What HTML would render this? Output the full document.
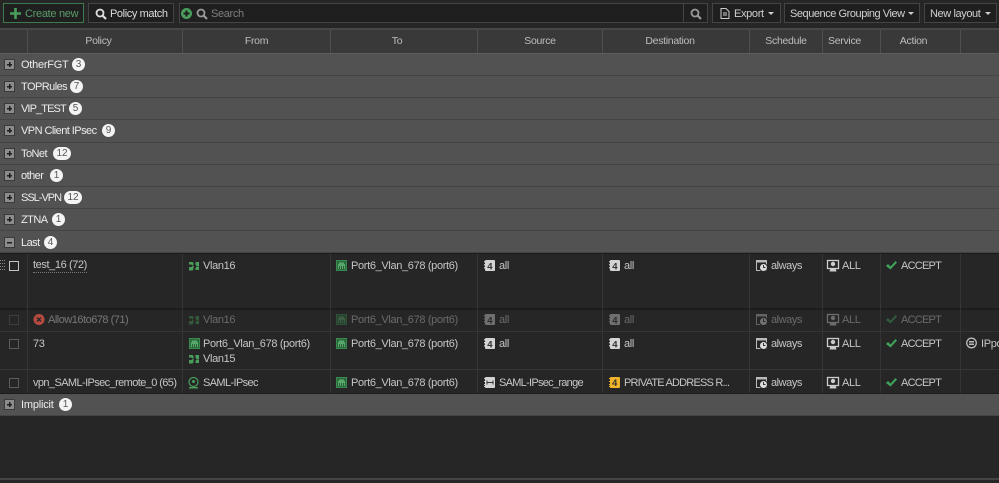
<!DOCTYPE html>
<html><head><meta charset="utf-8"><style>
html,body{margin:0;padding:0;background:#262626}
#p{position:relative;width:999px;height:483px;overflow:hidden;background:#262626;font:11px "Liberation Sans",sans-serif;color:#c6c6c6}
#p div,#p span.t,#p svg{position:absolute}
.t{white-space:nowrap;line-height:14px;letter-spacing:-.34px}
.btn{top:3px;height:18px;border:1px solid #444;background:#1f1f1f;box-sizing:content-box}
.hc{top:30px;height:23px;background:#393939;border-right:1px solid #4f4f4f;box-sizing:border-box;text-align:center;line-height:23px;color:#bdbdbd;letter-spacing:-.3px;font-size:10.5px}
.g{left:0;width:999px;height:21px;background:#525252;border-bottom:1px solid #444}
.gi{left:4px;width:9px;height:9px;background:#8c8c8c;border:1px solid #3a3a3a;box-sizing:content-box}
.gi:before{content:"";position:absolute;left:2px;top:4px;width:5px;height:1px;background:#1c1c1c;box-shadow:0 .5px 0 #1c1c1c}
.gi.p:after{content:"";position:absolute;left:4px;top:2px;width:1px;height:5px;background:#1c1c1c;box-shadow:.5px 0 0 #1c1c1c}
.gt{color:#ececec;letter-spacing:-.55px}
.b{height:13px;background:#f4f4f4;border-radius:7px;color:#555;text-align:center;line-height:13px;font-size:10px}
.v{width:1px;background:#353535}
.h{left:0;width:999px;height:1px;background:#353535}
.cb{width:8px;height:8px;border:1px solid #5c5c5c}
.dim{opacity:.42}
</style></head><body><div id="p">
<div style="left:0;top:0;width:999px;height:28px;background:#262626"></div>
<div style="left:0;top:28px;width:999px;height:2px;background:#484848"></div>

<div class="btn" style="left:3px;width:79px;border-color:#3f7a4c"></div>
<svg style="left:10px;top:8px" width="11" height="11"><path d="M4.200 0h2.600v4.200H11v2.600H6.800V11H4.200V6.800H0V4.200h4.200z" fill="#4a9e5c"/></svg>
<span class="t" style="left:25px;top:7px;color:#5b9c6b;letter-spacing:-.3px">Create new</span>

<div class="btn" style="left:88px;width:84px"></div>
<svg style="left:95px;top:8px" width="12" height="12"><circle cx="5" cy="5" r="3.500" fill="none" stroke="#ddd" stroke-width="1.800"/><path d="M7.500 7.500l3.500 3.500" stroke="#ddd" stroke-width="2.200"/></svg>
<span class="t" style="left:110px;top:7px;color:#dcdcdc;letter-spacing:-.4px">Policy match</span>

<div class="btn" style="left:179px;width:527px"></div>
<svg style="left:181px;top:8px" width="11" height="11"><circle cx="5.500" cy="5.500" r="5.500" fill="#4a9e5c"/><path d="M4.500 2.500h2v2h2v2h-2v2h-2v-2h-2v-2h2z" fill="#1e1e1e"/></svg>
<svg style="left:196px;top:8px" width="12" height="12"><circle cx="5" cy="5" r="3.500" fill="none" stroke="#999" stroke-width="1.800"/><path d="M7.500 7.500l3.500 3.500" stroke="#999" stroke-width="2.200"/></svg>
<span class="t" style="left:211px;top:7px;color:#7e7e7e">Search</span>
<div class="v" style="left:683px;top:4px;height:18px;background:#444"></div>
<svg style="left:690px;top:8px" width="12" height="12"><circle cx="5" cy="5" r="3.500" fill="none" stroke="#999" stroke-width="1.800"/><path d="M7.500 7.500l3.500 3.500" stroke="#999" stroke-width="2.200"/></svg>
<div class="btn" style="left:712px;width:67px"></div>
<svg style="left:720px;top:8px" width="10" height="11"><path d="M1 .5h5l3 3v7H1z" fill="none" stroke="#ccc"/><path d="M3 5h4M3 7h4" stroke="#ccc"/></svg>
<span class="t" style="left:734px;top:7px;color:#d0d0d0">Export</span>
<svg style="left:768px;top:12px" width="7" height="4"><path d="M0 0h6L3 3z" fill="#ccc"/></svg>
<div class="btn" style="left:784px;width:134px"></div>
<span class="t" style="left:790px;top:7px;color:#d0d0d0;letter-spacing:-.45px">Sequence Grouping View</span>
<svg style="left:908px;top:12px" width="7" height="4"><path d="M0 0h6L3 3z" fill="#ccc"/></svg>
<div class="btn" style="left:924px;width:71px"></div>
<span class="t" style="left:930px;top:7px;color:#d0d0d0;letter-spacing:-.4px">New layout</span>
<svg style="left:985px;top:12px" width="7" height="4"><path d="M0 0h6L3 3z" fill="#ccc"/></svg>

<div class="hc" style="left:0;width:28px"></div>
<div class="hc" style="left:28px;width:155px;padding-right:13px">Policy</div>
<div class="hc" style="left:183px;width:148px">From</div>
<div class="hc" style="left:331px;width:147px;padding-right:14px">To</div>
<div class="hc" style="left:478px;width:125px">Source</div>
<div class="hc" style="left:603px;width:147px;padding-right:12px">Destination</div>
<div class="hc" style="left:750px;width:73px">Schedule</div>
<div class="hc" style="left:823px;width:58px;padding-right:14px">Service</div>
<div class="hc" style="left:881px;width:80px;padding-right:14px">Action</div>
<div class="hc" style="left:961px;width:38px;border-right:0"></div>
<div style="left:0;top:53px;width:999px;height:1px;background:#5c5c5c"></div>

<div class="g" style="top:54px"></div><div class="gi p" style="left:4px;top:59px"></div><span class="t gt" style="left:21px;top:58px;letter-spacing:-.25px">OtherFGT</span><div class="b" style="left:72px;top:58px;width:13px">3</div>
<div class="g" style="top:76px"></div><div class="gi p" style="left:4px;top:81px"></div><span class="t gt" style="left:21px;top:80px">TOPRules</span><div class="b" style="left:70px;top:80px;width:13px">7</div>
<div class="g" style="top:98px"></div><div class="gi p" style="left:4px;top:103px"></div><span class="t gt" style="left:21px;top:102px;letter-spacing:-.9px">VIP_TEST</span><div class="b" style="left:69px;top:102px;width:13px">5</div>
<div class="g" style="top:120px;height:22px"></div><div class="gi p" style="left:4px;top:125px"></div><span class="t gt" style="left:21px;top:124px">VPN Client IPsec</span><div class="b" style="left:102px;top:124px;width:13px">9</div>
<div class="g" style="top:143px"></div><div class="gi p" style="left:4px;top:148px"></div><span class="t gt" style="left:21px;top:147px">ToNet</span><div class="b" style="left:53px;top:147px;width:18px">12</div>
<div class="g" style="top:165px"></div><div class="gi p" style="left:4px;top:170px"></div><span class="t gt" style="left:21px;top:169px">other</span><div class="b" style="left:50px;top:169px;width:13px">1</div>
<div class="g" style="top:187px"></div><div class="gi p" style="left:4px;top:192px"></div><span class="t gt" style="left:21px;top:191px;letter-spacing:-1px">SSL-VPN</span><div class="b" style="left:64px;top:191px;width:18px">12</div>
<div class="g" style="top:209px"></div><div class="gi p" style="left:4px;top:214px"></div><span class="t gt" style="left:21px;top:213px">ZTNA</span><div class="b" style="left:52px;top:213px;width:13px">1</div>
<div class="g" style="top:231px"></div><div class="gi" style="left:4px;top:237px"></div><span class="t gt" style="left:21px;top:236px">Last</span><div class="b" style="left:44px;top:236px;width:13px">4</div>
<div class="g" style="top:394px"></div><div class="gi p" style="left:4px;top:399px"></div><span class="t gt" style="left:21px;top:398px;letter-spacing:-.2px">Implicit</span><div class="b" style="left:59px;top:398px;width:13px">1</div>

<div style="left:0;top:253px;width:999px;height:1px;background:#1c1c1c"></div>
<div class="h" style="top:308px;height:2px;background:#1c1c1c"></div>
<div class="h" style="top:331px"></div>
<div class="h" style="top:369px"></div>
<div class="h" style="top:393px;background:#1c1c1c"></div>
<div style="left:0;top:478px;width:999px;height:2px;background:#444"></div>
<div class="v" style="left:27px;top:254px;height:139px"></div>
<div class="v" style="left:182px;top:254px;height:139px"></div>
<div class="v" style="left:330px;top:254px;height:139px"></div>
<div class="v" style="left:477px;top:254px;height:139px"></div>
<div class="v" style="left:602px;top:254px;height:139px"></div>
<div class="v" style="left:749px;top:254px;height:139px"></div>
<div class="v" style="left:822px;top:254px;height:139px"></div>
<div class="v" style="left:880px;top:254px;height:139px"></div>
<div class="v" style="left:960px;top:254px;height:139px"></div>

<svg style="left:0;top:260px" width="6" height="11"><g fill="#888"><rect x="0" y="0" width="1" height="1"/><rect x="2" y="0" width="1" height="1"/><rect x="4" y="0" width="1" height="1"/><rect x="0" y="3" width="1" height="1"/><rect x="2" y="3" width="1" height="1"/><rect x="4" y="3" width="1" height="1"/><rect x="0" y="6" width="1" height="1"/><rect x="2" y="6" width="1" height="1"/><rect x="4" y="6" width="1" height="1"/><rect x="0" y="9" width="1" height="1"/><rect x="2" y="9" width="1" height="1"/><rect x="4" y="9" width="1" height="1"/></g></svg>
<div class="cb" style="left:9px;top:261px;border-color:#c4c4c4"></div>
<span class="t" style="left:33px;top:259px;border-bottom:1px dotted #777;line-height:13px;letter-spacing:-.4px">test_16 (72)</span>
<span class="t" style="left:203px;top:259px">Vlan16</span>
<span class="t" style="left:351px;top:259px">Port6_Vlan_678 (port6)</span>
<span class="t" style="left:499px;top:259px">all</span>
<span class="t" style="left:624px;top:259px">all</span>
<span class="t" style="left:771px;top:259px;letter-spacing:-.45px">always</span>
<span class="t" style="left:842px;top:259px">ALL</span>
<span class="t" style="left:901px;top:259px;letter-spacing:-.75px">ACCEPT</span>

<svg style="left:0;top:0" width="999" height="483">
<defs>
<g id="port"><rect width="11" height="11" fill="#3a8a50"/><rect x="1" y="1" width="9" height="9" fill="#2a6a3c"/><path d="M2 9V4h1V2.500h5V4h1v5z" fill="#58a86c"/><path d="M3.500 9V6M5.500 9V6M7.500 9V6" stroke="#1f5230" stroke-width=".8"/></g>
<g id="vlan"><path d="M0 1h3.500l1 1v2.500h-1L2.500 3.500H0zM0 6h2.500l1-1h1v3l-1 1.500H0zM6.500 1H10v4H7.500L6.500 3.500zM6.500 7l1-1.500H10V9H6.500z" fill="#4a9e5c"/></g>
<g id="addr"><rect x="1" y="0" width="10" height="11" fill="#d4d4d4" rx="1"/><path d="M0 1h1v1.500H0zM0 4h1v1.500H0zM0 7h1v1.500H0z" fill="#bbb"/><text x="3.200" y="9.300" font-size="9.500" font-weight="bold" font-family="Liberation Sans" fill="#333">4</text></g>
<g id="sch"><rect x=".5" y=".5" width="10" height="10" fill="none" stroke="#bbb"/><rect x="0" y="0" width="11" height="2.500" fill="#bbb"/><circle cx="7.500" cy="7.500" r="4" fill="#ddd" stroke="#262626"/><path d="M7.500 5v2.500h2" stroke="#333" fill="none"/></g>
<g id="svc"><rect x=".5" y=".5" width="11" height="8" fill="none" stroke="#ccc" stroke-width="1.300"/><circle cx="6" cy="4" r="2.200" fill="#ccc"/><path d="M2.500 11.500l1-3.500h5l1 3.500z" fill="#ccc"/></g>
<path id="chk" d="M0 5l2-2 2.500 2.500L9.500 0l1.500 1.500-6.500 7z" fill="#3fa35a"/>
</defs>
<use href="#vlan" x="189" y="261"/><use href="#port" x="336" y="260"/><use href="#addr" x="484" y="260"/><use href="#addr" x="609" y="260"/><use href="#sch" x="756" y="260"/><use href="#svc" x="827" y="260"/><use href="#chk" x="886" y="261"/>
<use href="#port" x="189" y="338"/><use href="#vlan" x="189" y="354"/><use href="#port" x="336" y="338"/><use href="#addr" x="484" y="338"/><use href="#addr" x="609" y="338"/><use href="#sch" x="756" y="338"/><use href="#svc" x="827" y="338"/><use href="#chk" x="886" y="339"/>
<circle cx="971.500" cy="343" r="4.800" fill="none" stroke="#bbb" stroke-width="1.300"/><path d="M969 341.500h5M969 343h5M969 344.500h5" stroke="#bbb"/>
<circle cx="193.500" cy="382" r="4.500" fill="none" stroke="#4a9e5c" stroke-width="1.200"/><circle cx="193.500" cy="381.500" r="1.500" fill="#4a9e5c"/><path d="M189 388.500h9v-1.500h-9z" fill="#4a9e5c"/>
<use href="#port" x="336" y="377"/>
<rect x="485" y="377" width="10" height="11" fill="#d4d4d4" rx="1"/><path d="M486.500 382.500h7M487 380.500v4M493 380.500v4" stroke="#333"/><path d="M484 378h1v1h-1zM484 381h1v1h-1zM484 384h1v1h-1zM484 387h1v-1h-1z" fill="#ccc"/>
<rect x="610" y="377" width="10" height="11" fill="#f0b429" rx="1"/><path d="M609 378h1v1h-1zM609 381h1v1h-1zM609 384h1v1h-1zM609 386h1v1h-1z" fill="#f0b429"/><text x="612" y="386" font-size="9.500" font-weight="bold" font-family="Liberation Sans" fill="#333">4</text>
<use href="#sch" x="756" y="377"/><use href="#svc" x="827" y="377"/><use href="#chk" x="886" y="378"/>
<g opacity=".42"><use href="#vlan" x="189" y="315"/><use href="#port" x="336" y="314"/><use href="#addr" x="484" y="314"/><use href="#addr" x="609" y="314"/><use href="#sch" x="756" y="314"/><use href="#svc" x="827" y="314"/><use href="#chk" x="886" y="315"/></g>
<circle cx="39" cy="319.500" r="5.500" fill="#b84a3f"/><path d="M37 317.500l4 4M41 317.500l-4 4" stroke="#2a2a2a" stroke-width="1.500"/>
</svg>

<div class="cb" style="left:9px;top:315px;border-color:#3e3e3e"></div>
<span class="t" style="left:48px;top:313px;opacity:.5;letter-spacing:-.5px">Allow16to678 (71)</span>
<span class="t dim" style="left:203px;top:313px">Vlan16</span>
<span class="t dim" style="left:351px;top:313px">Port6_Vlan_678 (port6)</span>
<span class="t dim" style="left:499px;top:313px">all</span>
<span class="t dim" style="left:624px;top:313px">all</span>
<span class="t dim" style="left:771px;top:313px;letter-spacing:-.45px">always</span>
<span class="t dim" style="left:842px;top:313px">ALL</span>
<span class="t dim" style="left:901px;top:313px;letter-spacing:-.75px">ACCEPT</span>

<div class="cb" style="left:9px;top:339px"></div>
<span class="t" style="left:33px;top:337px">73</span>
<span class="t" style="left:203px;top:337px">Port6_Vlan_678 (port6)</span>
<span class="t" style="left:203px;top:352px">Vlan15</span>
<span class="t" style="left:351px;top:337px">Port6_Vlan_678 (port6)</span>
<span class="t" style="left:499px;top:337px">all</span>
<span class="t" style="left:624px;top:337px">all</span>
<span class="t" style="left:771px;top:337px;letter-spacing:-.45px">always</span>
<span class="t" style="left:842px;top:337px">ALL</span>
<span class="t" style="left:901px;top:337px;letter-spacing:-.75px">ACCEPT</span>
<span class="t" style="left:981px;top:337px">IPpool</span>

<div class="cb" style="left:9px;top:378px"></div>
<span class="t" style="left:33px;top:376px;letter-spacing:-.6px">vpn_SAML-IPsec_remote_0 (65)</span>
<span class="t" style="left:203px;top:376px;letter-spacing:-.62px">SAML-IPsec</span>
<span class="t" style="left:351px;top:376px">Port6_Vlan_678 (port6)</span>
<span class="t" style="left:499px;top:376px;letter-spacing:-.72px">SAML-IPsec_range</span>
<span class="t" style="left:624px;top:376px;letter-spacing:-.8px">PRIVATE ADDRESS R...</span>
<span class="t" style="left:771px;top:376px;letter-spacing:-.45px">always</span>
<span class="t" style="left:842px;top:376px">ALL</span>
<span class="t" style="left:901px;top:376px;letter-spacing:-.75px">ACCEPT</span>
</div></body></html>
